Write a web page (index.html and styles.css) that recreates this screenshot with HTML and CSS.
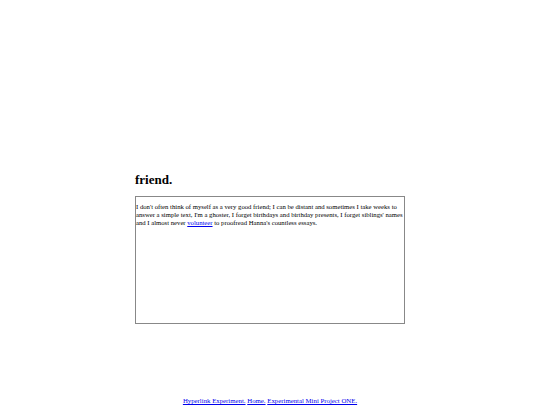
FILE: index.html
```html
<!DOCTYPE html>
<html>
<head>
<meta charset="utf-8">
<link rel="stylesheet" href="styles.css">
</head>
<body>
<main class="page">
  <h1 class="title">friend.</h1>
  <div class="box">
    <p class="entry">I don't often think of myself as a very good friend; I can be distant and sometimes I take weeks to answer a simple text, I'm a ghoster, I forget birthdays and birthday presents, I forget siblings' names and I almost never <a href="#">volunteer</a> to proofread Hanna's countless essays.</p>
  </div>
</main>
<footer class="footer">
  <a href="#">Hyperlink Experiment.</a> <a href="#">Home.</a> <a href="#">Experimental Mini Project ONE.</a>
</footer>
</body>
</html>
```
FILE: styles.css
```css
html, body {
  margin: 0;
  padding: 0;
  background: #fff;
}
body {
  font-family: "Liberation Serif", "Times New Roman", serif;
  color: #000;
}
.page {
  width: 270px;
  margin: 0 auto;
  padding-top: 172px;
}
.title {
  margin: 0 0 9px 0;
  font-size: 13px;
  line-height: 15px;
  font-weight: bold;
}
.box {
  box-sizing: border-box;
  height: 128px;
  border: 1px solid #888;
  padding: 6px 0 0 0;
}
.entry {
  margin: 0;
  font-size: 6.7px;
  line-height: 8px;
}
a {
  color: #0000ee;
}
.footer {
  margin-top: 73px;
  text-align: center;
  font-size: 6.8px;
  line-height: 8px;
}
```
